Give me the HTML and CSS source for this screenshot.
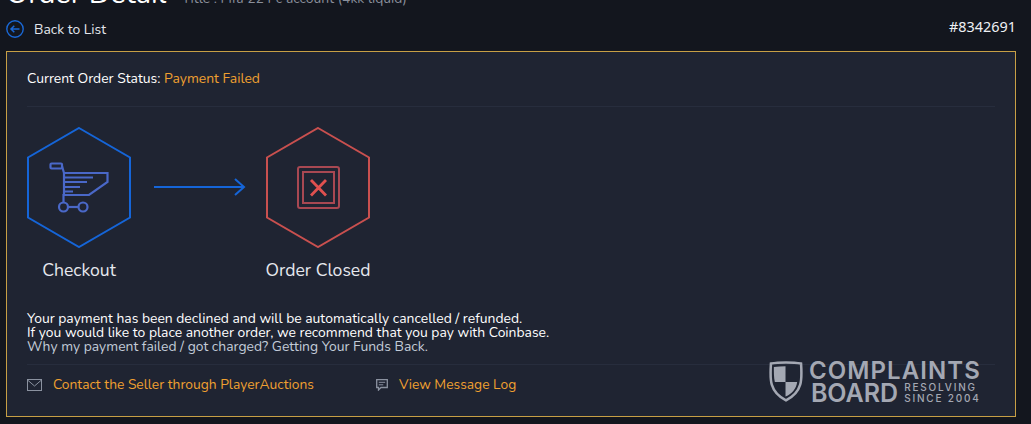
FILE: index.html
```html
<!DOCTYPE html>
<html lang="en">
<head>
    <meta charset="UTF-8">
    <meta name="viewport" content="width=device-width, initial-scale=1.0">
    <title>Order Detail</title>
    <link rel="stylesheet" href="styles.css">
</head>
<body>
    <div class="page-title">
        <h1>Order Detail</h1>
        <span class="subtitle">- Title : Fifa 22 Pc account (4kk liquid)</span>
    </div>
    <div class="top-row">
        <a class="back" href="#">
            <svg class="back-icon" viewBox="0 0 18 18" width="18" height="18">
                <circle cx="9" cy="9" r="8.2" fill="none" stroke="#1a68d6" stroke-width="1.4"/>
                <path d="M13.500 9H5M8.300 5.800L5 9l3.300 3.200" fill="none" stroke="#1a68d6" stroke-width="1.500"/>
            </svg>
            Back to List
        </a>
        <div class="order-id">#8342691</div>
    </div>
    <div class="panel">
        <div class="status">Current Order Status: <span class="orange">Payment Failed</span></div>
        <div class="steps">
            <div class="step">
                <svg viewBox="0 0 104 121" width="104" height="121">
                    <polygon points="52,1 103,30.5 103,90.5 52,120 1,90.5 1,30.5" fill="none" stroke="#1565d8" stroke-width="2"/>
                    <g fill="none" stroke="#4a68c8" stroke-width="2.200">
                        <rect x="23.500" y="36.500" width="11.500" height="5" rx="1"/>
                        <path d="M35 39l2 7h43.500v9L62 68H36.500V75"/>
                        <path d="M37 46v22"/>
                        <circle cx="36.500" cy="80" r="4.500"/>
                        <circle cx="56" cy="80" r="4.500"/>
                        <path d="M41 80h10.500"/>
                        <path d="M37 50.500h29M37 55h23M37 60h16M37 64.500h9" stroke-width="2"/>
                    </g>
                </svg>
                <div class="step-name">Checkout</div>
            </div>
            <svg class="arrow" viewBox="0 0 92 20" width="92" height="20">
                <path d="M0 10h90M81 2l9 8-9 8" fill="none" stroke="#1565d8" stroke-width="2"/>
            </svg>
            <div class="step">
                <svg viewBox="0 0 104 121" width="104" height="121">
                    <polygon points="52,1 103,30.5 103,90.5 52,120 1,90.5 1,30.5" fill="none" stroke="#c9504f" stroke-width="2"/>
                    <g fill="none" stroke="#a84852" stroke-width="2">
                        <rect x="32" y="40" width="41" height="41" rx="2"/>
                        <rect x="37" y="45" width="31" height="31"/>
                        <path d="M45 53l15 15.500M60 53L45 68.500" stroke="#e0504f" stroke-width="2.800"/>
                    </g>
                </svg>
                <div class="step-name">Order Closed</div>
            </div>
        </div>
        <div class="message">
            Your payment has been declined and will be automatically cancelled / refunded.<br>
            If you would like to place another order, we recommend that you pay with Coinbase.<br>
            <a class="help" href="#">Why my payment failed / got charged? Getting Your Funds Back.</a>
        </div>
        <div class="actions">
            <a class="action contact" href="#">
                <svg viewBox="0 0 15 12" width="15" height="12">
                    <rect x="0.500" y="0.500" width="14" height="11" fill="none" stroke="#8b92a0"/>
                    <path d="M0.500 1l7 6 7-6" fill="none" stroke="#8b92a0"/>
                </svg>
                Contact the Seller through PlayerAuctions
            </a>
            <a class="action" href="#">
                <svg viewBox="0 0 12 12" width="12" height="12">
                    <path d="M0.700 0.700h10.600v7.800H5L2.500 11V8.500H0.700z" fill="none" stroke="#8b92a0" stroke-width="1.300"/>
                    <path d="M2.800 3.300h6.400M2.800 5.800h4.500" stroke="#8b92a0"/>
                </svg>
                View Message Log
            </a>
        </div>
        <div class="watermark">
            <svg viewBox="0 0 35 44" width="34" height="44">
                <path d="M2 4c8-1.500 23-1.500 31 0 1 16 2 29-15.500 38C0 33 1 20 2 4z" fill="none" stroke="#a4a8b3" stroke-width="2.600"/>
                <path d="M5 7.500c4-.5 8-.8 12-.8V23H6C5 18 5 13 5 7.500zM17 23h12c-1 7-5 12-12 15z" fill="#a4a8b3"/>
            </svg>
            <div class="wm-text">
                <div class="wm-top">COMPLAINTS</div>
                <div class="wm-bottom">
                    <span class="wm-board">BOARD</span>
                    <span class="wm-small">RESOLVING<br>SINCE 2004</span>
                </div>
            </div>
        </div>
    </div>
</body>
</html>
```

FILE: styles.css
```css
html, body {
    height: 100%;
}
body {
    margin: 0;
    overflow: hidden;
    background-color: #13161e;
    color: #fff;
    font-family: "Nunito", "Lato", "Noto Sans", sans-serif;
    font-size: 13.9px;
}
a {
    text-decoration: none;
    color: inherit;
}
.page-title {
    display: flex;
    align-items: baseline;
    gap: 6px;
    height: 20px;
    margin-top: -16px;
    padding-left: 6px;
    line-height: 20px;
}
.page-title h1 {
    margin: 0;
    font-size: 29px;
    font-weight: 400;
    color: #fff;
}
.subtitle {
    color: #8a8f9b;
    font-size: 13.9px;
}
.top-row {
    display: flex;
    justify-content: space-between;
    align-items: center;
    height: 47px;
    padding: 0 15px 0 6px;
}
.back {
    display: flex;
    align-items: center;
    gap: 10px;
    margin-top: 3px;
    color: #e3e6ec;
}
.order-id {
    font-family: "Noto Sans", sans-serif;
    font-size: 14.4px;
    color: #eef0f4;
    margin-bottom: 3px;
}
.panel {
    position: relative;
    margin: 0 15px 0 6px;
    height: 364px;
    padding: 0 20px;
    border: 1px solid #c79f45;
    background-color: #1f2432;
}
.status {
    padding: 18px 0 18px;
    line-height: 18px;
    border-bottom: 1px solid #272d3d;
}
.orange {
    color: #f0a030;
}
.steps {
    display: flex;
    align-items: flex-start;
    margin-top: 20px;
}
.step {
    display: flex;
    flex-direction: column;
    align-items: center;
    width: 104px;
}
.step-name {
    margin-top: 10px;
    font-size: 17.6px;
    white-space: nowrap;
    color: #e6e8ee;
}
.arrow {
    margin: 50px 20px 0 23px;
}
.message {
    margin-top: 30px;
    line-height: 14px;
    color: #fff;
}
.help {
    color: #c3ccd9;
}
.actions {
    display: flex;
    gap: 62px;
    margin-top: 10px;
    padding-top: 10px;
    border-top: 1px solid #272d3d;
    color: #f0a030;
}
.action {
    display: flex;
    align-items: center;
    gap: 11px;
    font-size: 13.8px;
}
.watermark {
    position: absolute;
    right: 34px;
    bottom: 12px;
    display: flex;
    gap: 6px;
    color: #a4a8b3;
    font-family: "Inter", sans-serif;
    font-weight: 600;
}
.wm-top {
    font-size: 24px;
    line-height: 23px;
    letter-spacing: 1.1px;
}
.wm-bottom {
    display: flex;
    align-items: center;
    gap: 6px;
    padding-left: 2px;
}
.wm-board {
    font-size: 25px;
    line-height: 21px;
}
.wm-small {
    font-size: 10px;
    font-weight: 500;
    line-height: 11px;
    letter-spacing: 1.8px;
}
```
